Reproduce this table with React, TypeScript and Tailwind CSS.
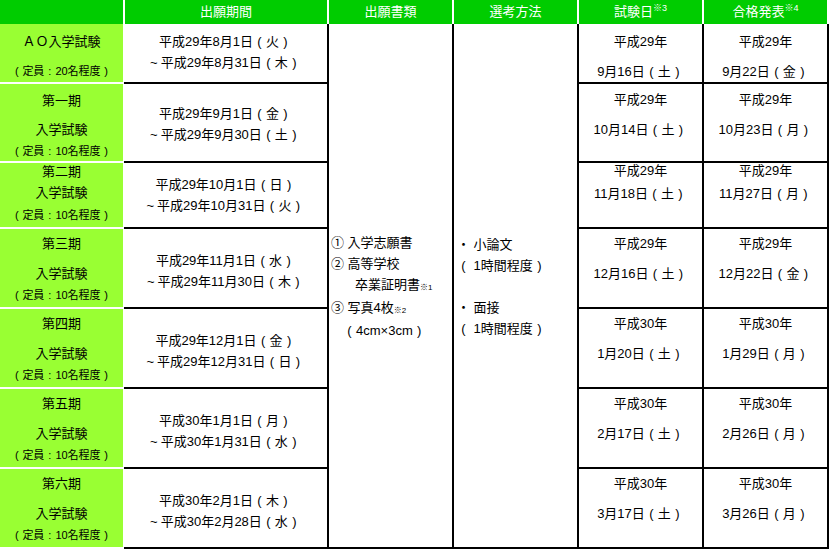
import React from "react";

type Row = {
  label: string[];
  cap: string;
  period: [string, string];
  exam: [string, string];
  result: [string, string];
};

const rows: Row[] = [
  { label: ["ＡＯ入学試験"], cap: "（定員：20名程度）", period: ["平成29年8月1日（火）", "~平成29年8月31日（木）"], exam: ["平成29年", "9月16日（土）"], result: ["平成29年", "9月22日（金）"] },
  { label: ["第一期", "入学試験"], cap: "（定員：10名程度）", period: ["平成29年9月1日（金）", "~平成29年9月30日（土）"], exam: ["平成29年", "10月14日（土）"], result: ["平成29年", "10月23日（月）"] },
  { label: ["第二期", "入学試験"], cap: "（定員：10名程度）", period: ["平成29年10月1日（日）", "~平成29年10月31日（火）"], exam: ["平成29年", "11月18日（土）"], result: ["平成29年", "11月27日（月）"] },
  { label: ["第三期", "入学試験"], cap: "（定員：10名程度）", period: ["平成29年11月1日（水）", "~平成29年11月30日（木）"], exam: ["平成29年", "12月16日（土）"], result: ["平成29年", "12月22日（金）"] },
  { label: ["第四期", "入学試験"], cap: "（定員：10名程度）", period: ["平成29年12月1日（金）", "~平成29年12月31日（日）"], exam: ["平成30年", "1月20日（土）"], result: ["平成30年", "1月29日（月）"] },
  { label: ["第五期", "入学試験"], cap: "（定員：10名程度）", period: ["平成30年1月1日（月）", "~平成30年1月31日（水）"], exam: ["平成30年", "2月17日（土）"], result: ["平成30年", "2月26日（月）"] },
  { label: ["第六期", "入学試験"], cap: "（定員：10名程度）", period: ["平成30年2月1日（木）", "~平成30年2月28日（水）"], exam: ["平成30年", "3月17日（土）"], result: ["平成30年", "3月26日（月）"] },
];

const MAP: Record<string, string> = { "（": "(", "）": ")", "：": ":" };

function J({ t }: { t: string }) {
  const parts = t.split(/([（）：~])/).filter((p) => p !== "");
  return (
    <>
      {parts.map((p, k) =>
        MAP[p] ? (
          <span key={k} className="inline-block w-[1em] text-center">
            {MAP[p]}
          </span>
        ) : p === "~" ? (
          <span key={k} className="inline-block mr-[3px]">~</span>
        ) : (
          <React.Fragment key={k}>{p}</React.Fragment>
        )
      )}
    </>
  );
}

function LabelCell({ r, i }: { r: Row; i: number }) {
  const top = i === 0 ? "" : "border-t-2 border-white";
  const bottom = i === rows.length - 1 ? "border-b-2 border-white" : "";
  if (i === 0) {
    return (
      <div className={`bg-[#99ff33] border-r border-white flex flex-col items-center pt-[3px] ${top}`}>
        <div className="leading-[30px] text-[13px]">{r.label[0]}</div>
        <div className="leading-[28px] text-[11px]"><J t={r.cap} /></div>
      </div>
    );
  }
  let l1 = "leading-[30px]", l2 = "leading-[30px]", l3 = "leading-[12px]", pt = "pt-0";
  if (i === 1) { l1 = "leading-[30px]"; l2 = "leading-[28px]"; l3 = "leading-[14px]"; pt = "pt-[2px]"; }
  if (i === 2) { l1 = "leading-[18px]"; l2 = "leading-[24px]"; l3 = "leading-[20px]"; pt = "pt-0"; }
  return (
    <div className={`bg-[#99ff33] border-r border-white flex flex-col items-center ${pt} ${top} ${bottom}`}>
      <div className={`${l1} text-[13px]`}>{r.label[0]}</div>
      <div className={`${l2} text-[13px]`}>{r.label[1]}</div>
      <div className={`${l3} text-[11px]`}><J t={r.cap} /></div>
    </div>
  );
}

function PeriodCell({ r, i }: { r: Row; i: number }) {
  const top = i === 0 ? "" : "border-t-2 border-black";
  const bottom = i === rows.length - 1 ? "border-b-2 border-black" : "";
  const pt = i === 0 ? "pb-[2px]" : i === 1 ? "pt-[2px]" : i === 2 ? "pt-0" : "pt-[5px]";
  return (
    <div className={`flex flex-col items-center justify-center text-[13px] leading-[21px] ${pt} ${top} ${bottom}`}>
      <div><J t={r.period[0]} /></div>
      <div><J t={r.period[1]} /></div>
    </div>
  );
}

function DateCell({ lines, i, last }: { lines: [string, string]; i: number; last?: boolean }) {
  const top = i === 0 ? "" : "border-t-2 border-black";
  const bottom = i === rows.length - 1 ? "border-b-2" : "";
  let pt = "pt-0", l1 = "leading-[30px]", l2 = "leading-[30px]";
  if (i === 0) pt = "pt-[3px]";
  if (i === 1) pt = "pt-[1px]";
  if (i === 2) { l1 = "leading-[16px]"; l2 = "leading-[30px]"; }
  return (
    <div className={`flex flex-col items-center text-[13px] border-l-2 border-black ${last ? "border-r-2" : ""} ${pt} ${top} ${bottom}`}>
      <div className={l1}>{lines[0]}</div>
      <div className={l2}><J t={lines[1]} /></div>
    </div>
  );
}

export default function App() {
  return (
    <div className="w-[830px] h-[549px] bg-white text-black font-['Liberation_Sans','Noto_Sans_CJK_JP',sans-serif] overflow-hidden">
      <div className="grid grid-cols-[124px_203px_125px_125px_125px_127px] grid-rows-[24px_58px_79px_66px_80px_80px_80px_82px]">
        <div className="bg-[#00cc00] border-r border-white" />
        <div className="bg-[#00cc00] border-l border-white text-white text-[13px] leading-[24px] text-center">出願期間</div>
        <div className="bg-[#00cc00] border-l-2 border-white text-white text-[13px] leading-[24px] text-center">出願書類</div>
        <div className="bg-[#00cc00] border-l-2 border-white text-white text-[13px] leading-[24px] text-center">選考方法</div>
        <div className="bg-[#00cc00] border-l-2 border-white text-white text-[13px] leading-[24px] text-center">
          試験日<span className="text-[9px] relative -top-[5px]">※3</span>
        </div>
        <div className="bg-[#00cc00] border-l-2 border-r-2 border-white text-white text-[13px] leading-[24px] text-center">
          合格発表<span className="text-[9px] relative -top-[5px]">※4</span>
        </div>

        {rows.map((r, i) => (
          <React.Fragment key={i}>
            <LabelCell r={r} i={i} />
            <PeriodCell r={r} i={i} />
            {i === 0 && (
              <>
                <div className="row-span-7 border-l-2 border-b-2 border-black flex flex-col justify-center text-[13px] leading-[21px] pl-[2px] pt-[1px]">
                  <div>① 入学志願書</div>
                  <div>② 高等学校</div>
                  <div className="pl-[24px]">
                    卒業証明書<span className="text-[8px] relative top-[1px]">※1</span>
                  </div>
                  <div>
                    ③ 写真4枚<span className="text-[8px] relative top-[1px]">※2</span>
                  </div>
                  <div className="pl-[12px]"><J t="（4cm×3cm）" /></div>
                </div>
                <div className="row-span-7 border-l-2 border-b-2 border-black flex flex-col justify-center text-[13px] leading-[21px] pl-[3px] pt-[1px]">
                  <div>・ 小論文</div>
                  <div><J t="（ 1時間程度）" /></div>
                  <div>&nbsp;</div>
                  <div>・ 面接</div>
                  <div><J t="（ 1時間程度）" /></div>
                </div>
              </>
            )}
            <DateCell lines={r.exam} i={i} />
            <DateCell lines={r.result} i={i} last />
          </React.Fragment>
        ))}
      </div>
    </div>
  );
}
